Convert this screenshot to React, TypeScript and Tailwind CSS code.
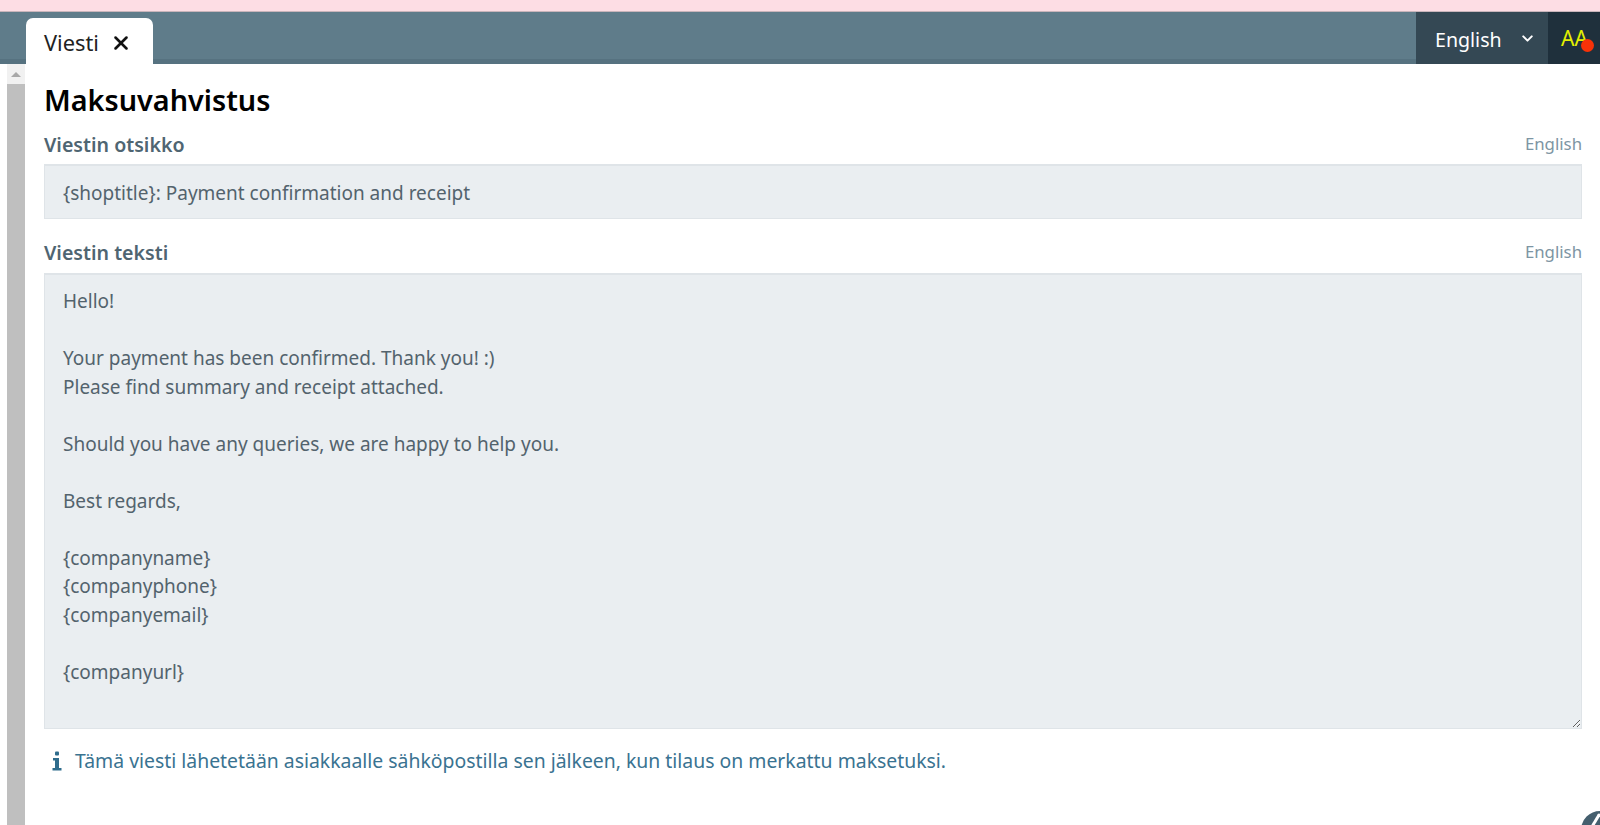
import { X, ChevronDown } from "lucide-react";

const BODY = `Hello!

Your payment has been confirmed. Thank you! :)
Please find summary and receipt attached.

Should you have any queries, we are happy to help you.

Best regards,

{companyname}
{companyphone}
{companyemail}

{companyurl}`;

function FieldLabel({ children }: { children: string }) {
  return (
    <div className="flex items-end justify-between">
      <label className="text-[19.6px] font-semibold leading-[26px] text-[#4f6572]">{children}</label>
      <span className="text-[16.8px] leading-[26px] text-[#7d95a3] -translate-y-[1px]">English</span>
    </div>
  );
}

export default function App() {
  return (
    <div className="relative flex h-[825px] w-[1600px] flex-col overflow-hidden bg-white font-['Noto_Sans',sans-serif]">
      <div className="h-[11px] flex-none bg-[#fddde4]" />
      <div className="h-px flex-none bg-[#c9b5bb]" />
      <header className="flex h-[52px] flex-none items-stretch border-b-[5px] border-[#567280] bg-[#5f7c8a]">
        <div className="w-[26px] flex-none" />
        <div className="-mb-[5px] mt-[6px] flex w-[127px] flex-none items-center gap-[11px] rounded-t-[7px] bg-white pl-[18px] pt-[3px]">
          <span className="text-[21.8px] leading-none text-[#222]">Viesti</span>
          <X size={22} strokeWidth={2.8} className="text-[#111]" />
        </div>
        <div className="flex-1" />
        <div className="flex w-[132px] flex-none items-center justify-between bg-[#344854] pl-[19px] pr-[12px] -mb-[5px]">
          <span className="pt-[3px] text-[19.6px] text-white">English</span>
          <ChevronDown size={17} strokeWidth={2.8} className="text-white" />
        </div>
        <div className="relative w-[52px] flex-none bg-[#1f303c] -mb-[5px]">
          <span className="absolute left-[13px] top-[16px] text-[21px] leading-5 text-[#e4f000]">AA</span>
          <span className="absolute left-[33px] top-[27px] h-[13px] w-[13px] rounded-full bg-[#f73208]" />
        </div>
      </header>
      <div className="flex min-h-0 flex-1">
        <div className="flex w-[26px] flex-none">
          <div className="w-[7px] flex-none" />
          <div className="flex w-[18px] flex-none flex-col bg-[#bfbfbf]">
            <div className="flex h-[20px] flex-none items-center justify-center bg-[#f1f1f1]">
              <span className="h-0 w-0 border-x-[5px] border-b-[5px] border-x-transparent border-b-[#a8a8a8]" />
            </div>
          </div>
        </div>
        <main className="min-w-0 flex-1 pl-[18px] pr-[18px]">
          <h1 className="mt-[16px] text-[28.8px] font-semibold leading-[40px] text-black">Maksuvahvistus</h1>
          <div className="mt-[12px]">
            <FieldLabel>Viestin otsikko</FieldLabel>
          </div>
          <input
            readOnly
            value="{shoptitle}: Payment confirmation and receipt"
            className="mt-[6px] block h-[55px] w-full border border-[#dfe4e8] border-t-2 bg-[#eaeef1] px-[18px] pt-[2px] text-[19px] text-[#53636d] outline-none"
          />
          <div className="mt-[21px]">
            <FieldLabel>Viestin teksti</FieldLabel>
          </div>
          <textarea
            readOnly
            value={BODY}
            className="mt-[7px] block h-[456px] w-full resize-y border border-[#dfe4e8] border-t-2 bg-[#eaeef1] px-[18px] py-[12px] text-[19px] leading-[28.5px] text-[#53636d] outline-none"
          />
          <div className="mt-[19px] flex items-center gap-[13px] pl-[8px]">
            <svg width="10" height="20" viewBox="0 0 10 20" fill="#2f6c8c">
              <rect x="3" y="0.5" width="4" height="4" rx="1" />
              <path d="M1 7h6v10h2.5v2.5H.5V17H3V9.5H1z" />
            </svg>
            <p className="text-[19.4px] leading-[26px] text-[#3a7391]">
              Tämä viesti lähetetään asiakkaalle sähköpostilla sen jälkeen, kun tilaus on merkattu maksetuksi.
            </p>
          </div>
        </main>
      </div>
      <div className="absolute left-[1578px] top-[808px] h-[44px] w-[44px] rounded-full border-[3px] border-white bg-[#455f6e]">
        <svg width="38" height="38" viewBox="0 0 38 38" fill="none" stroke="#fff" strokeWidth="3" strokeLinecap="round">
          <path d="M12 14 18 4" />
        </svg>
      </div>
    </div>
  );
}
